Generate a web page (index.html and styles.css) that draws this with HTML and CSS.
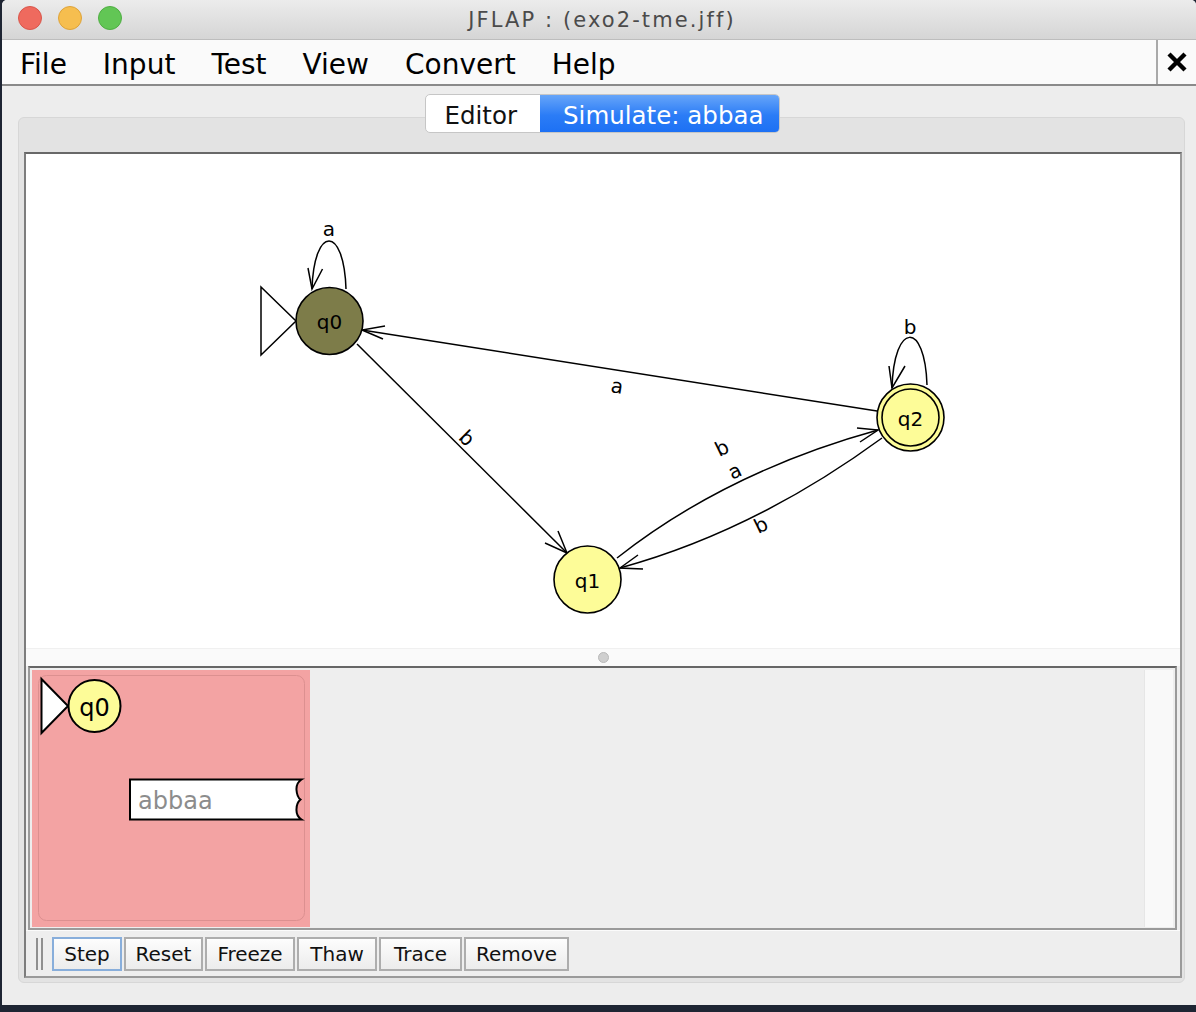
FILE: index.html
```html
<!DOCTYPE html>
<html>
<head>
<meta charset="utf-8">
<title>JFLAP</title>
<link rel="stylesheet" href="styles.css">
</head>
<body>
<div class="window">
  <div class="titlebar">
    <div class="lights">
      <span class="light red"></span>
      <span class="light yellow"></span>
      <span class="light green"></span>
    </div>
    <div class="title">JFLAP : (exo2-tme.jff)</div>
    <div class="title-spacer"></div>
  </div>

  <div class="menubar">
    <nav class="menus">
      <span class="menu">File</span>
      <span class="menu">Input</span>
      <span class="menu">Test</span>
      <span class="menu">View</span>
      <span class="menu">Convert</span>
      <span class="menu">Help</span>
    </nav>
    <div class="close">
      <svg width="20" height="20" viewBox="0 0 20 20"><path d="M2 2 L18 18 M18 2 L2 18" stroke="#000" stroke-width="4.4" fill="none"/></svg>
    </div>
  </div>

  <div class="tabs">
    <div class="seg">
      <span class="seg-item">Editor</span>
      <span class="seg-item active">Simulate: abbaa</span>
    </div>
  </div>

  <div class="panel">
    <div class="sim">
      <div class="canvas">
        <svg class="graph" width="1154" height="494" viewBox="26 154 1154 494">
          <g fill="none" stroke="#000" stroke-width="1.5">
            <!-- q0 self loop -->
            <path d="M346 289 C344 225, 314 225, 312 289"/>
            <path d="M308 268 L312 289 L322.5 269"/>
            <!-- q2 self loop -->
            <path d="M927 385 C925 321, 894 321, 892 388"/>
            <path d="M889 366 L892 388 L905 366"/>
            <!-- q2 -> q0 -->
            <path d="M877 411 L362 330"/>
            <path d="M385 326 L362 330 L383 339"/>
            <!-- q0 -> q1 -->
            <path d="M357 344 L567 553"/>
            <path d="M558 531 L567 553 L545 543"/>
            <!-- q1 -> q2 -->
            <path d="M617 558 Q726 472 878 430"/>
            <path d="M857 428 L878 430 L860 442"/>
            <!-- q2 -> q1 -->
            <path d="M882 438 Q755 531 620 568"/>
            <path d="M638 555 L620 568 L643 569"/>
            <!-- initial arrow -->
            <path d="M261 287 L261 355 L296 321 Z" fill="#fff"/>
          </g>
          <g stroke="#000" stroke-width="1.6">
            <circle cx="329.5" cy="321" r="33.5" fill="#7d7c49"/>
            <circle cx="587.5" cy="579.5" r="33.5" fill="#fdfc98"/>
            <circle cx="910.5" cy="417.5" r="33.5" fill="#fdfc98"/>
            <circle cx="910.5" cy="417.5" r="28.5" fill="none"/>
          </g>
          <g class="lbl" text-anchor="middle">
            <text x="329.5" y="329">q0</text>
            <text x="587.5" y="588">q1</text>
            <text x="910.5" y="426">q2</text>
            <text x="329" y="236">a</text>
            <text x="910" y="334">b</text>
            <text transform="translate(617 387) rotate(9)" y="6">a</text>
            <text transform="translate(467 438) rotate(45)" y="7">b</text>
            <text transform="translate(735 472) rotate(-26)" y="6">a</text>
            <text transform="translate(722 448) rotate(-26)" y="7">b</text>
            <text transform="translate(761 525) rotate(-26)" y="7">b</text>
          </g>
        </svg>
      </div>
      <div class="splitter"><span class="knob"></span></div>
      <div class="configs">
        <div class="config">
          <svg width="278" height="257" viewBox="32 670 278 257">
            <rect x="38.5" y="675.5" width="266" height="245" rx="8" fill="none" stroke="#dc9090" stroke-width="1"/>
            <path d="M41.5 679 L41.5 733 L68 706 Z" fill="#fff" stroke="#000" stroke-width="2"/>
            <circle cx="94.5" cy="706" r="26" fill="#fdfc98" stroke="#000" stroke-width="2"/>
            <text class="cfg-state" x="94.5" y="716" text-anchor="middle">q0</text>
            <path d="M130 779.5 L301.5 779.5 Q296 783 296.5 790 Q297 797 300.5 799.5 Q296.5 803 296.5 809 Q296 816 301.5 819.5 L130 819.5 Z" fill="#fff" stroke="#000" stroke-width="2"/>
            <text class="tape" x="138" y="809">abbaa</text>
          </svg>
        </div>
        <div class="config-rest"></div>
        <div class="scrolltrack"></div>
      </div>
      <div class="toolbar">
        <span class="grip"></span>
        <button class="btn btn-step focus">Step</button>
        <button class="btn btn-reset">Reset</button>
        <button class="btn btn-freeze">Freeze</button>
        <button class="btn btn-thaw">Thaw</button>
        <button class="btn btn-trace">Trace</button>
        <button class="btn btn-remove">Remove</button>
      </div>
    </div>
  </div>
</div>
</body>
</html>
```

FILE: styles.css
```css
html, body {
  margin: 0;
  padding: 0;
}

body {
  width: 1196px;
  height: 1012px;
  overflow: hidden;
  background: #1e2533;
  font-family: "DejaVu Sans", "Noto Sans", sans-serif;
}

.window {
  margin-left: 2px;
  width: 1194px;
  height: 1005px;
  background: #ededed;
  border-radius: 5px 5px 0 0;
  display: flex;
  flex-direction: column;
  overflow: hidden;
}

/* title bar */
.titlebar {
  height: 39px;
  flex: none;
  border-bottom: 1px solid #bdbdbd;
  background: linear-gradient(#ececec, #d5d5d5);
  display: grid;
  grid-template-columns: 1fr auto 1fr;
  align-items: start;
}

.lights {
  display: flex;
  gap: 16px;
  padding-left: 16px;
  margin-top: 6px;
}

.light {
  width: 24px;
  height: 24px;
  border-radius: 50%;
  box-sizing: border-box;
}
.light.red { background: #ef6a5e; border: 1px solid #d9564b; }
.light.yellow { background: #f6be4f; border: 1px solid #dea33a; }
.light.green { background: #62c655; border: 1px solid #4fae43; }

.title {
  font-size: 21px;
  letter-spacing: 2.1px;
  color: #4b4b4b;
  padding-top: 8px;
  padding-left: 6px;
  line-height: 24px;
}

/* menu bar */
.menubar {
  height: 44px;
  flex: none;
  background: #fafafa;
  border-bottom: 2px solid #8a8a8a;
  display: flex;
  justify-content: space-between;
}

.menus {
  display: flex;
}

.menu {
  font-size: 28px;
  line-height: 39px;
  padding: 5px 18px 0 18px;
  color: #000;
}

.close {
  width: 38px;
  border-left: 2px solid #a9a9a9;
  display: flex;
  align-items: center;
  justify-content: center;
}

/* segmented tabs */
.tabs {
  flex: none;
  display: flex;
  justify-content: center;
  margin-top: 8px;
  padding-left: 7px;
  position: relative;
  z-index: 1;
}

.seg {
  display: flex;
  height: 39px;
  border-radius: 5px;
  overflow: hidden;
  box-sizing: border-box;
  border: 1px solid #c6c6c6;
  background: #fff;
}

.seg-item {
  font-size: 24.5px;
  line-height: 37px;
  padding: 2px 23px 0 19px;
  color: #111;
}

.seg-item.active {
  background: linear-gradient(#69a7f9, #2b7cf6 55%, #1c70f4);
  color: #fff;
  margin: -1px -1px -1px 0;
  padding: 3px 17px 1px 23px;
}

/* main panel */
.panel {
  flex: 1;
  margin: -16px 11px 22px 16px;
  background: #e3e3e3;
  border: 1px solid #d7d7d7;
  border-radius: 6px;
  padding: 34px 2px 4px 5px;
  display: flex;
}

.sim {
  flex: 1;
  display: flex;
  flex-direction: column;
  border: 2px solid #9a9a9a;
  border-top-color: #686868;
  border-left-color: #7d7d7d;
  background: #eeeeee;
}

.canvas {
  height: 494px;
  flex: none;
  background: #fff;
}

.graph {
  display: block;
}

.lbl text {
  font-family: "DejaVu Sans", sans-serif;
  font-size: 20px;
  fill: #000;
}

.splitter {
  height: 18px;
  flex: none;
  box-sizing: border-box;
  border-top: 1px solid #f0f0f0;
  background: #fafafa;
  display: flex;
  justify-content: center;
  align-items: center;
}

.knob {
  width: 11px;
  height: 11px;
  border-radius: 50%;
  box-sizing: border-box;
  background: #cfcfcf;
  border: 1px solid #b9b9b9;
}

.configs {
  height: 264px;
  flex: none;
  box-sizing: border-box;
  margin: 0 3px 0 2px;
  border: 2px solid #9a9a9a;
  border-top-color: #666;
  padding: 2px 2px 1px 2px;
  display: flex;
  background: #eeeeee;
}

.config {
  width: 278px;
  background: #f3a3a3;
}

.config svg {
  display: block;
}

.cfg-state {
  font-family: "DejaVu Sans", sans-serif;
  font-size: 24px;
  fill: #000;
}

.tape {
  font-family: "DejaVu Sans", sans-serif;
  font-size: 24px;
  fill: #8c8c8c;
}

.config-rest {
  flex: 1;
}

.scrolltrack {
  width: 28px;
  background: #f9f9f9;
  border-left: 1px solid #e6e6e6;
}

/* toolbar */
.toolbar {
  flex: 1;
  border-top: 1px solid #fbfbfb;
  display: flex;
  align-items: center;
  padding-left: 10px;
}

.grip {
  width: 7px;
  height: 32px;
  box-sizing: border-box;
  border-left: 2px solid #8f8f8f;
  border-right: 2px solid #8f8f8f;
  margin-right: 9px;
}

.btn {
  height: 34px;
  margin: 0 2px 0 0;
  padding: 0;
  font-family: "DejaVu Sans", sans-serif;
  font-size: 20px;
  color: #111;
  border: 2px solid #adadad;
  border-radius: 0;
  background: linear-gradient(#fdfdfd, #ececec);
}

.btn-step { width: 70px; }
.btn-reset { width: 79px; }
.btn-freeze { width: 90px; }
.btn-thaw { width: 80px; }
.btn-trace { width: 83px; }
.btn-remove { width: 105px; }

.btn.focus {
  border-color: #88aedb;
}
```
